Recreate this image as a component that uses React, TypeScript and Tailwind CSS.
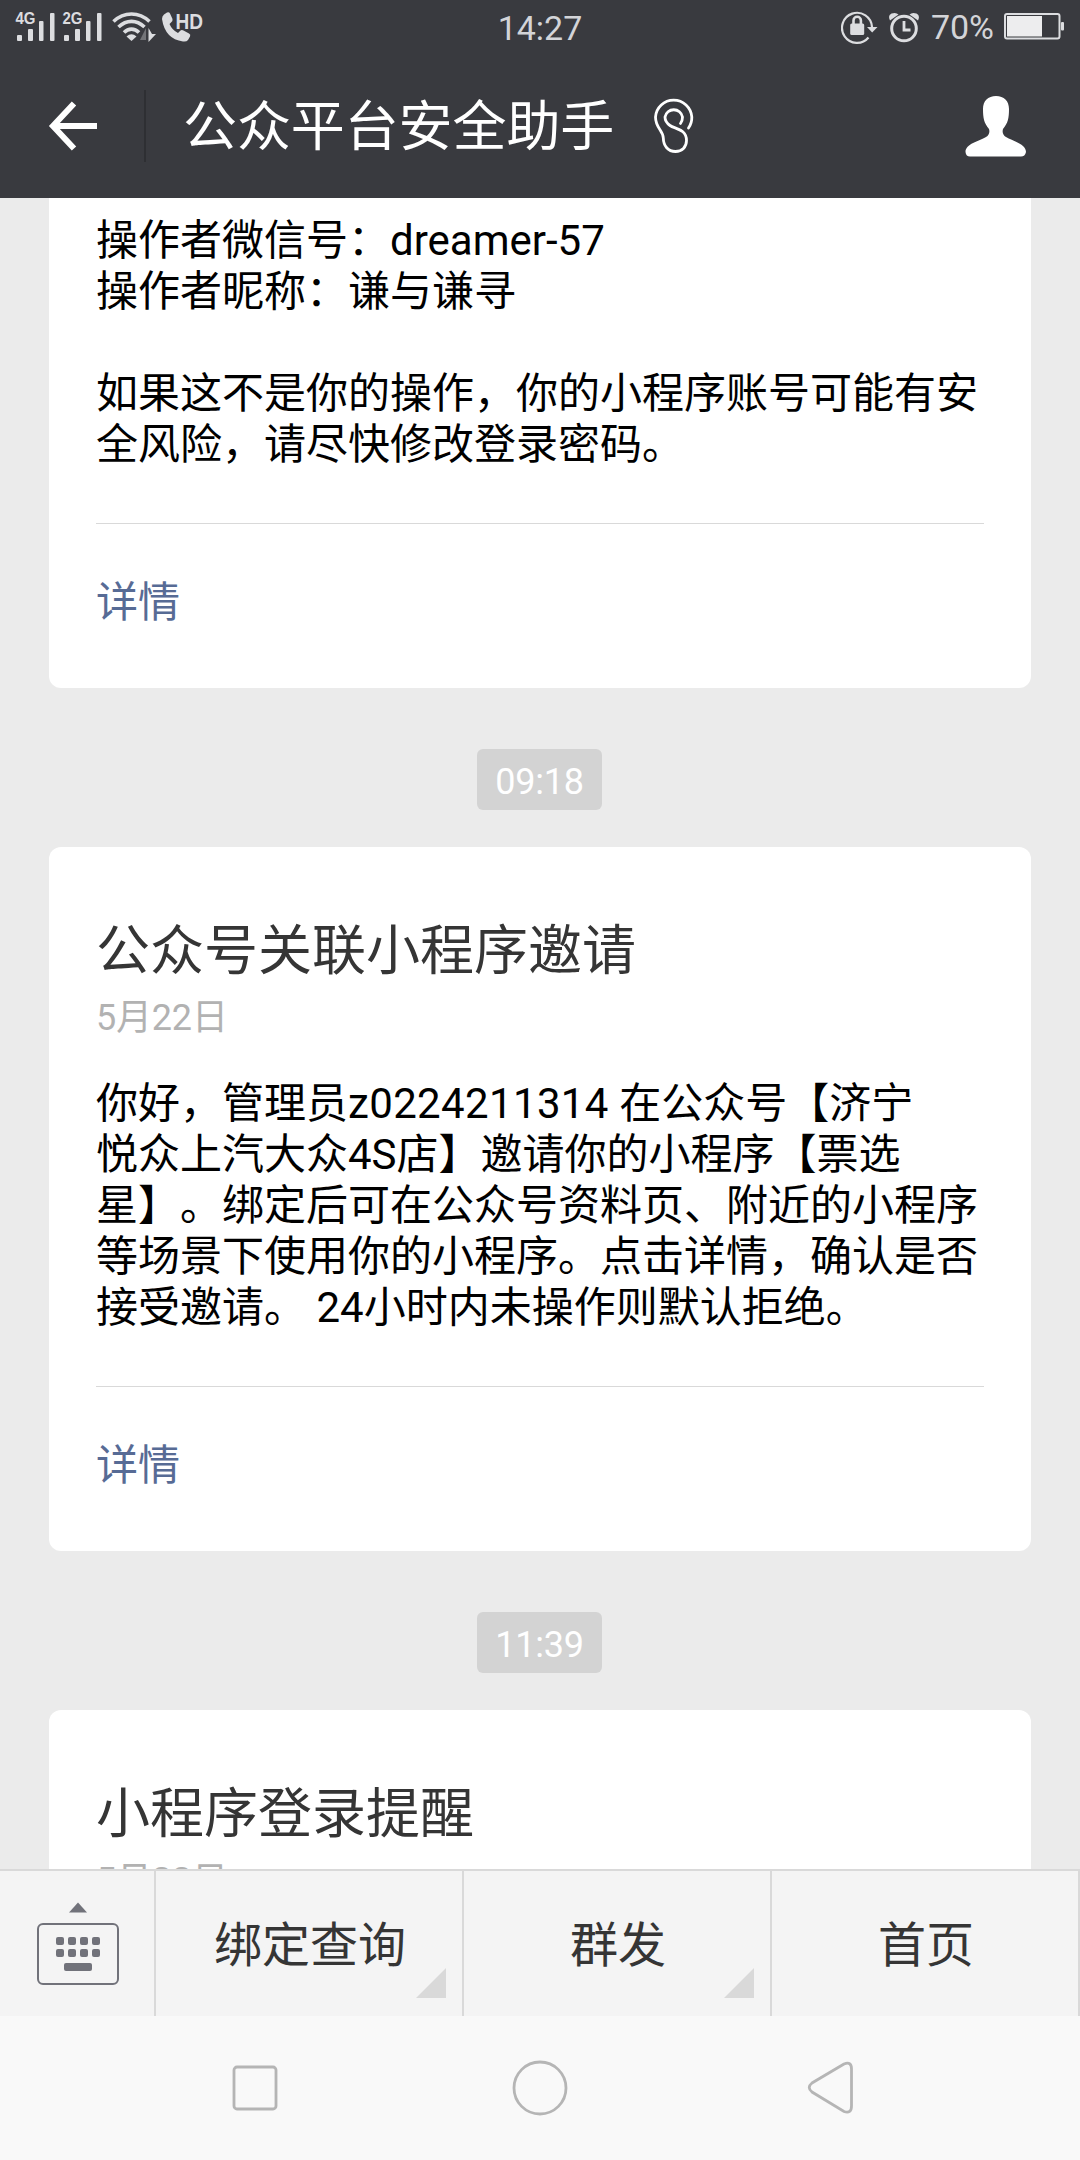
import type { ReactNode } from "react";

const SignalIcon = ({ label }: { label: string }) => (
  <svg width="40" height="32" viewBox="0 0 40 32" fill="#dcdde0" className="overflow-visible">
    <text x="-.5" y="13" fontSize="16.500" fontWeight="700" fontFamily="Liberation Sans, sans-serif" textLength="20" lengthAdjust="spacingAndGlyphs">
      {label}
    </text>
    <rect x="1" y="24" width="5" height="6" rx="1" />
    <rect x="12" y="18" width="5" height="12" rx="1" />
    <rect x="23" y="10" width="4.5" height="20" rx="1" />
    <rect x="34" y="2" width="4.5" height="28" rx="1" />
  </svg>
);

const WifiIcon = () => (
  <svg width="46" height="32" viewBox="0 0 46 32" fill="none" stroke="#dcdde0" strokeWidth="3.6">
    <path d="M1.5 10.5C12 .5 27 .5 37.5 10.5" />
    <path d="M6.5 16C14.5 8.5 24.5 8.5 32.5 16" />
    <path d="M12 21.5C16.5 17 22.5 17 27 21.5" />
    <path d="M14.5 25.5Q19.5 21 24.5 25.5L19.5 30Z" fill="#dcdde0" stroke="none" />
    <path d="M34 17V29H28Z" fill="#737478" stroke="none" />
    <path d="M36.5 17V31L44 23H40Z" fill="#dcdde0" stroke="none" />
  </svg>
);

const CallHdIcon = () => (
  <svg width="44" height="32" viewBox="0 0 44 32" fill="#dcdde0" className="overflow-visible">
    <path d="M2 3.5L5 1.5Q7 .5 8 2.5L10.5 8Q11 10 9 11.5L7.5 13Q10 19 16 22L18 20Q19.5 18.5 21.5 19.5L27 22.5Q29 23.5 28 25.5L26 29Q24.5 31 21 30.5Q3 28 0 8Q0 5 2 3.5Z" />
    <text x="13.5" y="18" fontSize="22" fontWeight="700" fontFamily="Liberation Sans, sans-serif" textLength="27.5" lengthAdjust="spacingAndGlyphs">
      HD
    </text>
  </svg>
);

const RotationLockIcon = () => (
  <svg width="38" height="34" viewBox="0 0 38 34" fill="none" stroke="#dcdde0" strokeWidth="2.2">
    <path d="M27.5 27.5A15 15 0 1 1 31 17" />
    <path d="M26 17H36.5L31.2 22.5Z" fill="#dcdde0" stroke="none" />
    <path d="M12.5 15V10.5a3.7 3.7 0 0 1 7.4 0V15" strokeWidth="2.6" />
    <rect x="9.2" y="13.5" width="14" height="11.5" rx="1.5" fill="#dcdde0" stroke="none" />
  </svg>
);

const AlarmIcon = () => (
  <svg width="32" height="34" viewBox="0 0 32 34" fill="none" stroke="#dcdde0" strokeWidth="3">
    <circle cx="16" cy="18.5" r="12.3" />
    <path d="M16 11V20H22.5" strokeWidth="2.8" />
    <path d="M2 10.5Q-.5 5.5 3.5 3.5Q8 2 10.5 4.5Z" fill="#dcdde0" stroke="none" />
    <path d="M30 10.5Q32.5 5.5 28.5 3.5Q24 2 21.5 4.5Z" fill="#dcdde0" stroke="none" />
  </svg>
);

const BatteryIcon = () => (
  <svg width="60" height="28" viewBox="0 0 60 28" fill="none">
    <rect x="1" y="1" width="54.5" height="24.5" rx="2" stroke="#dcdde0" strokeWidth="2" />
    <rect x="3" y="3" width="35" height="20.5" fill="#ededee" />
    <rect x="57" y="9" width="3" height="8.5" rx="1" fill="#dcdde0" />
  </svg>
);

const BackIcon = () => (
  <svg width="50" height="50" viewBox="0 0 50 50" fill="none" stroke="#fff" strokeWidth="6">
    <path d="M26 2.5L5 25L26 47.5M5 25H49" />
  </svg>
);

const EarIcon = () => (
  <svg width="40" height="56" viewBox="0 0 40 56" fill="none" stroke="#fff" strokeWidth="2.8" strokeLinecap="round">
    <path d="M34.5 30Q38 25 37.8 19A18.2 18.2 0 0 0 1.5 19C1.5 30 9 32 9.3 40C9.5 48 14 53.5 21.5 53.5C28 53.5 32.5 49 32.5 42.5C32.5 31 21 31 16 27.5C12.5 25 11 22.5 11 19A8.9 8.9 0 0 1 28.5 19Q28.5 23 26.5 25.5" />
  </svg>
);

const UserIcon = () => (
  <svg width="62" height="61" viewBox="0 0 62 61" fill="#fff">
    <path d="M31 0C39 0 44 5 44 13C44 22 43 27 38 33Q36.5 38 41 41C48 45 61 48 61 56Q60 60.5 56 60.5H5Q1 60.5 .5 56C.5 48 14 45 21 41Q25.5 38 24 33C19 27 18 22 18 13C18 5 23 0 31 0Z" />
  </svg>
);

const KeyboardIcon = () => (
  <svg width="82" height="84" viewBox="0 0 82 84" fill="#71727a">
    <path d="M32 10.5L41 .5L50 10.5Z" />
    <rect x="1" y="22" width="80" height="60" rx="5" fill="none" stroke="#71727a" strokeWidth="2" />
    {[19, 31, 43, 55].map((x) => (
      <g key={x}>
        <rect x={x} y="35" width="8" height="8" rx="2" />
        <rect x={x} y="47" width="8" height="8" rx="2" />
      </g>
    ))}
    <rect x="27" y="61" width="28" height="8" rx="2" />
  </svg>
);

const TimeBadge = ({ time }: { time: string }) => (
  <div className="mt-[61px] mb-[37px] ml-[477px] flex h-[61px] w-[125px] items-center justify-center rounded-[6px] bg-[#d3d3d3] pt-1 text-[36px] tracking-[-0.2px] text-white">
    {time}
  </div>
);

interface CardProps {
  title?: string;
  date?: string;
  lines?: ReactNode[];
  className: string;
}

const MessageCard = ({ title, date, lines, className }: CardProps) => (
  <article className={`mx-[49px] bg-white px-[47px] ${className}`}>
    {title && <h2 className="text-[54px] leading-[64px] text-[#353535]">{title}</h2>}
    {date && (
      <p className="mt-[13px] mb-[39px] text-[36px] leading-[42px] tracking-[-0.2px] text-[#b2b2b2]">{date}</p>
    )}
    {lines && (
      <>
        <div className="text-[42px] leading-[51px] whitespace-pre text-black">
          {lines.map((line, i) => (
            <p key={i} className="h-[51px]">
              {line}
            </p>
          ))}
        </div>
        <div className="mt-[53px] border-t border-[#d9d9d9]" />
        <a className="mt-[53px] block text-[42px] leading-[51px] text-[#576b95]">详情</a>
      </>
    )}
  </article>
);

const MenuItem = ({ children, more }: { children: ReactNode; more?: boolean }) => (
  <button className="relative flex flex-1 items-center justify-center border-r-2 border-[#d9d9d9] pt-1 pl-[2px] text-[48px] text-[#353535]">
    {children}
    {more && (
      <svg className="absolute right-4 bottom-[18px]" width="30" height="30" viewBox="0 0 30 30" fill="#d9d9d9">
        <path d="M30 0V30H0Z" />
      </svg>
    )}
  </button>
);

export default function App() {
  return (
    <div className="flex h-[2160px] w-[1080px] flex-col overflow-hidden bg-[#ebebeb] font-[Roboto,'Noto_Sans_CJK_SC',sans-serif] [text-spacing-trim:space-all]">
      {/* Status bar */}
      <div className="grid h-[54px] shrink-0 grid-cols-3 items-center bg-[#393a3f] pr-4 pl-4 text-[34px] text-[#d3d4d8]">
        <div className="flex items-center">
          <SignalIcon label="4G" />
          <div className="ml-[7px] flex">
            <SignalIcon label="2G" />
          </div>
          <div className="ml-[9px] flex">
            <WifiIcon />
          </div>
          <div className="ml-1 flex">
            <CallHdIcon />
          </div>
        </div>
        <div className="pt-[2px] text-center">14:27</div>
        <div className="flex items-center justify-end">
          <RotationLockIcon />
          <div className="mr-[11px] ml-[9px] flex">
            <AlarmIcon />
          </div>
          <span className="mr-[10px]">70%</span>
          <BatteryIcon />
        </div>
      </div>

      {/* Title bar */}
      <header className="flex h-36 shrink-0 items-center bg-[#393a3f] pr-[53px] pl-[48px]">
        <BackIcon />
        <div className="ml-[46px] h-[72px] w-[2px] bg-[#2e2f33]" />
        <h1 className="ml-[37px] pt-1 text-[54px] leading-[64px] tracking-[-0.1px] text-white">公众平台安全助手</h1>
        <div className="ml-10">
          <EarIcon />
        </div>
        <div className="ml-auto">
          <UserIcon />
        </div>
      </header>

      {/* Conversation */}
      <main className="min-h-0 flex-1 overflow-hidden">
        <MessageCard
          className="h-[490px] rounded-b-[12px] pt-[17px]"
          lines={[
            "操作者微信号：dreamer-57",
            "操作者昵称：谦与谦寻",
            "",
            "如果这不是你的操作，你的小程序账号可能有安",
            "全风险，请尽快修改登录密码。",
          ]}
        />
        <TimeBadge time="09:18" />
        <MessageCard
          className="h-[704px] rounded-[12px] pt-[73px]"
          title="公众号关联小程序邀请"
          date="5月22日"
          lines={[
            <>
              你好，管理员<span className="tracking-[0.35px]">z0224211314</span> 在公众号【济宁
            </>,
            "悦众上汽大众4S店】邀请你的小程序【票选",
            "星】。绑定后可在公众号资料页、附近的小程序",
            "等场景下使用你的小程序。点击详情，确认是否",
            "接受邀请。 24小时内未操作则默认拒绝。",
          ]}
        />
        <TimeBadge time="11:39" />
        <MessageCard className="h-[704px] rounded-t-[12px] pt-[73px]" title="小程序登录提醒" date="5月22日" />
      </main>

      {/* Account menu */}
      <nav className="flex h-[147px] shrink-0 border-t-2 border-[#d9d9d9] bg-[#f4f4f4]">
        <button className="flex w-[156px] items-center justify-center border-r-2 border-[#d9d9d9] pl-[2px]">
          <KeyboardIcon />
        </button>
        <MenuItem more>绑定查询</MenuItem>
        <MenuItem more>群发</MenuItem>
        <MenuItem>首页</MenuItem>
      </nav>

      {/* System navigation */}
      <div className="flex h-36 shrink-0 items-center bg-[#f9f9f9] pl-[232px]">
        <svg width="46" height="46" viewBox="0 0 46 46" fill="none" stroke="#b5b5b5" strokeWidth="2.8">
          <rect x="2" y="2" width="42" height="42" rx="3" />
        </svg>
        <svg className="ml-[234px]" width="56" height="56" viewBox="0 0 56 56" fill="none" stroke="#b5b5b5" strokeWidth="2.8">
          <circle cx="28" cy="28" r="26" />
        </svg>
        <svg className="ml-[239px]" width="48" height="54" viewBox="0 0 48 54" fill="none" stroke="#b5b5b5" strokeWidth="2.8">
          <path d="M37 3L5 22Q-.5 26.5 5 31L37 50.5Q44.5 53 44.5 45V8Q44.5 0 37 3Z" />
        </svg>
      </div>
    </div>
  );
}
